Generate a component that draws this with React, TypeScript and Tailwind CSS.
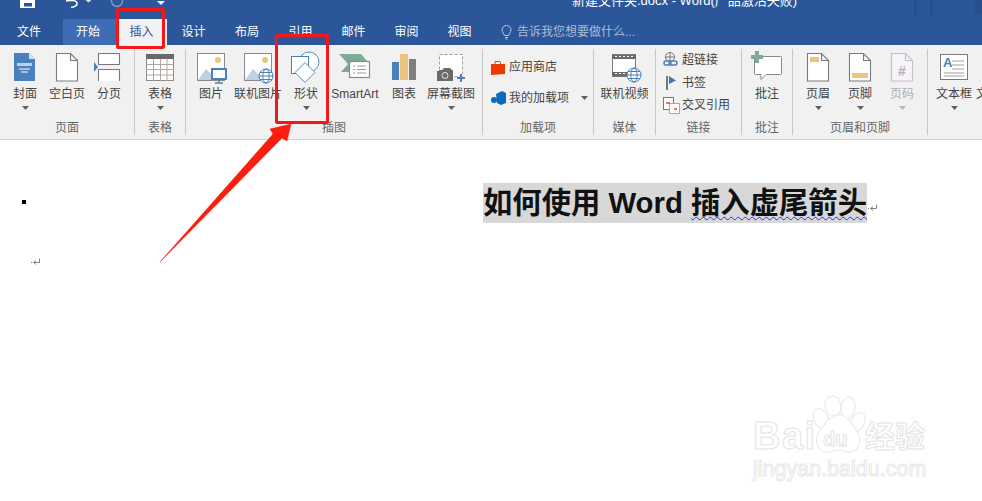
import React from "react";

const FONT = '"Liberation Sans","Noto Sans CJK SC",sans-serif';

const Caret = ({ light }: { light?: boolean }) => (
  <svg width="7" height="4" viewBox="0 0 7 4"><path d="M0 0h7L3.5 4z" fill={light ? "#b5b5b5" : "#606060"} /></svg>
);

const Btn = ({ w, icon, label, caret, disabled }: { w: string; icon: React.ReactNode; label: string; caret?: boolean; disabled?: boolean }) => (
  <div className={`${w} flex flex-col items-center shrink-0 pt-[2px]`}>
    <div className="h-[32px] w-[32px] flex items-center justify-center">{icon}</div>
    <div className={`h-[16px] mt-[3px] text-[12px] leading-[16px] whitespace-nowrap ${disabled ? "text-[#b0b0b0]" : "text-[#444444]"}`}>{label}</div>
    {caret && <div className="mt-[4px] h-[4px] flex"><Caret light={disabled} /></div>}
  </div>
);

const Group = ({ w, label, children, className = "" }: { w: string; label: string; children: React.ReactNode; className?: string }) => (
  <div className={`${w} shrink-0 h-[86px] mt-[4px] border-r border-[#c8c8c8] flex flex-col`}>
    <div className={`h-[72px] flex ${className}`}>{children}</div>
    <div className="h-[14px] text-center text-[12px] leading-[15px] text-[#666666]">{label}</div>
  </div>
);

const S = ({ children }: { children: React.ReactNode }) => (
  <svg width="32" height="32" viewBox="0 0 32 32" fill="none" overflow="visible">{children}</svg>
);

const Page = ({ fill = "#fff", stroke = "#7a7a7a" }: { fill?: string; stroke?: string }) => (
  <path d="M5.5 2.5h14l7 7v20.500h-21z M19.5 2.500v7h7" fill={fill} stroke={stroke} strokeWidth="1.100" />
);

const Globe = ({ x, y, r = 7 }: { x: number; y: number; r?: number }) => (
  <g stroke="#4a7fb8" fill="#fff">
    <circle cx={x} cy={y} r={r} />
    <ellipse cx={x} cy={y} rx={r * 0.45} ry={r} fill="none" />
    <path d={`M${x - r} ${y}h${2 * r}M${x - r + 1} ${y - r / 2}h${2 * r - 2}M${x - r + 1} ${y + r / 2}h${2 * r - 2}`} />
  </g>
);

const Picture = () => (
  <>
    <rect x="2.5" y="2.5" width="27" height="27" fill="#fff" stroke="#8a8a8a" />
    <circle cx="23" cy="9" r="3" fill="#edc47e" />
    <path d="M3 29l8-11 6 6 3-3 8 8z" fill="#bcd0e6" />
  </>
);

const icons = {
  cover: (
    <S>
      <path d="M5 2h15l6 6v22H5z" fill="#4a80bb" />
      <path d="M20 2l6 6h-6z" fill="#d5e3f1" />
      <path d="M8 12h15v3H8z" fill="#d5e3f1" opacity=".8" />
      <path d="M10 18h11M12 21h7" stroke="#fff" />
    </S>
  ),
  blank: <S><Page /></S>,
  pageBreak: (
    <S>
      <path d="M5.500 2.500h21v11h-21zM5.500 30v-11.500h21V30" fill="#fff" stroke="#7a7a7a" strokeWidth="1.100" />
      <path d="M1 11l4 5-4 5z" fill="#4a80bb" />
    </S>
  ),
  table: (
    <S>
      <rect x="2.5" y="3.5" width="27" height="26" fill="#fff" stroke="#8a8a8a" />
      <rect x="2" y="3" width="28" height="5" fill="#6a6a6a" />
      <path d="M2 13.500h28M2 18.500h28M2 24h28M9.500 8v22M16.500 8v22M23 8v22" stroke="#b0a8a0" />
    </S>
  ),
  picture: (
    <S>
      <Picture />
      <rect x="17" y="18" width="14" height="10" fill="#fff" stroke="#4a7fb8" strokeWidth="2" />
      <path d="M24 28v3M20 32h8" stroke="#4a7fb8" strokeWidth="1.500" />
    </S>
  ),
  online: (
    <S>
      <Picture />
      <Globe x={24} y={25} />
    </S>
  ),
  shape: (
    <S>
      <circle cx="19" cy="11" r="10" fill="#fff" stroke="#5b8fc4" />
      <rect x="1.500" y="5.500" width="17" height="17" fill="#fff" stroke="#4a7fb8" />
      <path d="M15 11.500l10 10-10 10-10-10z" fill="#fff" stroke="#5b8fc4" />
    </S>
  ),
  smart: (
    <S>
      <path d="M0 3h22l6 7H16v11H2l7-8z" fill="#7dab96" />
      <rect x="10.500" y="10.500" width="20" height="16" fill="#fff" stroke="#8a8a8a" strokeWidth="1.200" />
      <path d="M14 15h2M18 15h9M14 18.500h2M18 18.500h9M14 22h2M18 22h9" stroke="#9a9a9a" />
    </S>
  ),
  chart: (
    <S>
      <rect x="4" y="11" width="7" height="18" fill="#4a80bb" />
      <rect x="12" y="3" width="8" height="26" fill="#edc47e" />
      <rect x="21" y="8" width="7" height="21" fill="#7f7f7f" />
    </S>
  ),
  shot: (
    <S>
      <rect x="4.500" y="3.500" width="23" height="22" fill="#fff" stroke="#a0a0a0" strokeDasharray="3 2" />
      <path d="M2 20h2v-1h3l2-2h6l2 2h1v11H2z" fill="#6a6a6a" />
      <circle cx="10" cy="24.500" r="3" fill="#6a6a6a" stroke="#e8e8e8" />
      <path d="M26 23v8M22 27h8" stroke="#4a80bb" strokeWidth="2" />
    </S>
  ),
  video: (
    <S>
      <rect x="3.500" y="3.500" width="23" height="22" fill="#fff" stroke="#7a7a7a" />
      <path d="M3 4h24v4H3zM3 21h24v4H3z" fill="#6a6a6a" />
      <path d="M6 5.500h2M10 5.500h2M14 5.500h2M18 5.500h2M22 5.500h2M6 22.500h2M10 22.500h2M14 22.500h2" stroke="#fff" />
      <Globe x={25} y={24} />
    </S>
  ),
  comment: (
    <S>
      <path d="M3.500 5.500h26a1 1 0 0 1 1 1v16a1 1 0 0 1-1 1H15l-5 5v-5H4.500a1 1 0 0 1-1-1z" fill="#fff" stroke="#8a8a8a" />
      <path d="M4 0h4v4h4v4H8v4H4V8H0V4h4z" fill="#7dab96" />
    </S>
  ),
  header: (
    <S>
      <Page />
      <rect x="8" y="6" width="9" height="5" fill="#edc47e" />
    </S>
  ),
  footer: (
    <S>
      <Page />
      <rect x="8" y="22" width="16" height="5" fill="#edc47e" />
    </S>
  ),
  pageNo: (
    <S>
      <Page fill="#f6f4f8" stroke="#c4bec6" />
    </S>
  ),
  textbox: (
    <S>
      <rect x="2.500" y="3.500" width="27" height="25" fill="#fff" stroke="#7a7a7a" />
      <path d="M14 10h12M14 14h12M14 18h12M6 22h20M6 25h20" stroke="#a0a0a0" />
    </S>
  ),
};

const SmallRow = ({ icon, label }: { icon: React.ReactNode; label: string }) => (
  <div className="flex items-center h-[22.500px]">
    <div className="w-[19px] h-[18px] flex items-center shrink-0">{icon}</div>
    <span className="text-[12px] text-[#444444] whitespace-nowrap">{label}</span>
  </div>
);

const Return = () => (
  <svg width="10" height="9" viewBox="0 0 10 9" fill="none" className="shrink-0">
    <path d="M8.500 0.500v4H3M5 2.500L2.500 4.500 5 6.500" stroke="#808080" />
    <rect x="0" y="4" width="1" height="1" fill="#808080" />
  </svg>
);

const tabs: [string, string, string][] = [
  ["文件", "w-[58px] mr-[5px]", "text-white"],
  ["开始", "w-[53px] bg-[#3e6db5] pr-[3px]", "text-white"],
  ["插入", "w-[51px] bg-[#f1f1f1]", "text-[#2b579a]"],
  ["设计", "w-[53px]", "text-white"],
  ["布局", "w-[54px]", "text-white"],
  ["引用", "w-[53px]", "text-white"],
  ["邮件", "w-[53px]", "text-white"],
  ["审阅", "w-[53px]", "text-white"],
  ["视图", "w-[53px]", "text-white"],
];

export default function App() {
  return (
    <div className="relative w-[982px] h-[501px] overflow-hidden bg-white" style={{ fontFamily: FONT }}>
      {/* title bar */}
      <div className="h-[19px] bg-[#2b579a] relative overflow-hidden flex items-start">
        <svg width="15" height="8" viewBox="0 0 15 8" className="ml-[20px] shrink-0">
          <path d="M0 0h15v8H0z" fill="#fff" />
          <rect x="4" y="3" width="8" height="3.500" fill="#2b579a" />
        </svg>
        <svg width="26" height="9" viewBox="0 0 26 9" fill="none" className="ml-[30px] shrink-0">
          <path d="M1 1c4-1 11-1 11 2.500C12 6 9 7 6 7.500" stroke="#fff" strokeWidth="1.600" />
          <path d="M20.500 0h6l-3 2.500z" fill="#d8e0ee" />
        </svg>
        <svg width="14" height="8" viewBox="0 0 14 8" fill="none" className="ml-[19px] shrink-0">
          <circle cx="7" cy="1" r="5.500" stroke="#7c97c4" strokeWidth="1.500" />
        </svg>
        <svg width="8" height="4" viewBox="0 0 8 4" className="ml-[33px] mt-[1px] shrink-0">
          <path d="M0 0h8L4 4z" fill="#fff" />
        </svg>
        <div className="absolute left-[572px] top-[-8px] text-[13px] leading-[18px] text-white whitespace-nowrap">新建文件夹.docx - Word(产品激活失败)</div>
        <div className="absolute left-[914px] top-0 w-[3px] h-[16px] bg-[#26508f]" />
        <div className="absolute left-[930px] top-0 w-[3px] h-[18px] bg-[#26508f]" />
        <div className="absolute left-[974px] top-0 w-[8px] h-[14px] bg-[#26508f]" />
      </div>

      {/* tabs */}
      <div className="h-[26px] bg-[#2b579a] flex items-stretch">
        {tabs.map(([t, c, tc]) => (
          <div key={t} className={`${c} ${tc} shrink-0 flex items-center justify-center text-[12px]`}>{t}</div>
        ))}
        <div className="flex items-center ml-[15px] text-[12px] text-[#a9bcd9]">
          <svg width="11" height="15" viewBox="0 0 11 15" fill="none" className="mr-[5px]">
            <path d="M3.500 10.500C3 8.500 1 7.500 1 5a4.500 4.500 0 0 1 9 0c0 2.500-2 3.500-2.500 5.500zM4 12.500h3M4.500 14h2" stroke="#b9c9e2" />
          </svg>
          告诉我您想要做什么...
        </div>
      </div>

      {/* ribbon */}
      <div className="h-[95px] bg-[#f1f1f1] border-b border-[#d4d4d4] flex overflow-hidden">
        <Group w="w-[135px]" label="页面" className="pl-[4px]">
          <Btn w="w-[42px]" icon={icons.cover} label="封面" caret />
          <Btn w="w-[42px]" icon={icons.blank} label="空白页" />
          <Btn w="w-[42px]" icon={icons.pageBreak} label="分页" />
        </Group>
        <Group w="w-[51px]" label="表格" className="justify-center">
          <Btn w="w-[48px]" icon={icons.table} label="表格" caret />
        </Group>
        <Group w="w-[297px]" label="插图" className="pl-[2px]">
          <Btn w="w-[46px]" icon={icons.picture} label="图片" />
          <Btn w="w-[48px]" icon={icons.online} label="联机图片" />
          <Btn w="w-[48px]" icon={icons.shape} label="形状" caret />
          <Btn w="w-[50px]" icon={icons.smart} label="SmartArt" />
          <Btn w="w-[48px]" icon={icons.chart} label="图表" />
          <Btn w="w-[46px]" icon={icons.shot} label="屏幕截图" caret />
        </Group>
        <Group w="w-[111px]" label="加载项" className="flex-col pl-[8px] pt-[7px] gap-[9px]">
          <div className="flex items-center h-[22px]">
            <svg width="14" height="15" viewBox="0 0 14 15" className="mr-[4px]">
              <path d="M0 4h14v10l-14 1z" fill="#eb3c00" />
              <path d="M4 5V1.500h5L10 5" stroke="#eb3c00" fill="none" />
            </svg>
            <span className="text-[12px] text-[#444444]">应用商店</span>
          </div>
          <div className="flex items-center h-[22px]">
            <svg width="15" height="14" viewBox="0 0 15 14" className="mr-[3px]">
              <path d="M5 3l6-3 4 2v10l-5 2-4-2z" fill="#0a6ac0" />
              <circle cx="3" cy="9" r="3" fill="#0a6ac0" />
            </svg>
            <span className="text-[12px] text-[#444444]">我的加载项</span>
            <span className="ml-[12px] flex"><Caret /></span>
          </div>
        </Group>
        <Group w="w-[62px]" label="媒体" className="justify-center">
          <Btn w="w-[56px]" icon={icons.video} label="联机视频" />
        </Group>
        <Group w="w-[86px]" label="链接" className="flex-col pl-[7px]">
          <SmallRow
            label="超链接"
            icon={
              <svg width="16" height="16" viewBox="0 0 16 16" fill="none">
                <circle cx="7" cy="5" r="4.500" stroke="#777" />
                <path d="M2.500 5h9M7 .5v9" stroke="#777" />
                <rect x="1" y="9" width="7" height="4" rx="2" stroke="#4a80bb" strokeWidth="1.500" fill="#f1f1f1" />
                <rect x="6" y="9" width="8" height="4" rx="2" stroke="#4a80bb" strokeWidth="1.500" />
              </svg>
            }
          />
          <SmallRow
            label="书签"
            icon={
              <svg width="14" height="16" viewBox="0 0 14 16">
                <rect x="3" y="1" width="2" height="14" fill="#777" />
                <path d="M6 1l7 4.500L6 9z" fill="#3f79b8" />
              </svg>
            }
          />
          <SmallRow
            label="交叉引用"
            icon={
              <svg width="17" height="17" viewBox="0 0 17 17" fill="none">
                <rect x=".5" y=".5" width="10" height="12" fill="#fff" stroke="#777" />
                <rect x="6.500" y="6.500" width="10" height="10" fill="#fff" stroke="#aaa" />
                <path d="M3 6h4M11 12h3" stroke="#d84a1a" strokeWidth="1.500" />
              </svg>
            }
          />
        </Group>
        <Group w="w-[51px]" label="批注" className="justify-center">
          <Btn w="w-[48px]" icon={icons.comment} label="批注" />
        </Group>
        <Group w="w-[135px]" label="页眉和页脚" className="pl-[4px]">
          <Btn w="w-[42px]" icon={icons.header} label="页眉" caret />
          <Btn w="w-[42px]" icon={icons.footer} label="页脚" caret />
          <Btn
            w="w-[42px]"
            disabled
            caret
            label="页码"
            icon={
              <div className="relative w-[32px] h-[32px]">
                {icons.pageNo}
                <span className="absolute left-0 right-0 top-[13px] text-center text-[14px] leading-[15px] font-bold text-[#b5b0b8]">#</span>
              </div>
            }
          />
        </Group>
        <div className="flex shrink-0 pl-[4px] mt-[4px]">
          <Btn
            w="w-[44px]"
            caret
            label="文本框"
            icon={
              <div className="relative w-[32px] h-[32px]">
                {icons.textbox}
                <span className="absolute left-[5px] top-[5px] text-[13px] leading-[14px] font-bold text-[#4a80bb]">A</span>
              </div>
            }
          />
          <div className="pt-[2px]">
            <div className="h-[35px]" />
            <div className="text-[12px] leading-[16px] text-[#444444] whitespace-nowrap">文档</div>
          </div>
        </div>
      </div>

      {/* document */}
      <div className="pt-[43px] pl-[22px]">
        <div className="flex items-center h-[40px]">
          <div className="w-[4px] h-[4px] bg-black shrink-0 mt-[-3px]" />
          <div className="ml-[457px] h-[40px] bg-[#d8d8d8] text-[29.33px] leading-[40px] font-bold text-[#111111] whitespace-nowrap">
            如何使用 Word <span className="underline decoration-wavy decoration-[#2a3ad6] decoration-1 underline-offset-[3px]">插入虚尾箭头</span>
          </div>
          <div className="ml-[1px] mt-[10px]"><Return /></div>
        </div>
        <div className="mt-[35px] ml-[9px]"><Return /></div>
      </div>

      {/* annotations */}
      <div className="absolute left-[116px] top-[8px] w-[49px] h-[41px] border-[3px] border-[#f5161a] rounded-[2px]" />
      <div className="absolute left-[275px] top-[34px] w-[54px] h-[90px] border-[3px] border-[#f5161a] rounded-[2px]" />
      <svg className="absolute left-0 top-0 pointer-events-none" width="982" height="501" viewBox="0 0 982 501">
        <path d="M160 262L273 134 270 129 291 124 287 141 282 138z" fill="#fb1d10" stroke="#fb1d10" strokeWidth=".5" />
      </svg>

      {/* watermark */}
      <div className="absolute left-[753px] top-[395px] w-[180px] h-[90px] pointer-events-none">
        <svg className="absolute left-0 top-0" width="180" height="70" viewBox="0 0 180 70" fill="#fff" stroke="#ebebeb" strokeWidth="1.200">
          <ellipse cx="80" cy="11" rx="8" ry="10" transform="rotate(-10 80 11)" />
          <ellipse cx="95" cy="13" rx="7" ry="11" transform="rotate(10 95 13)" />
          <ellipse cx="68" cy="24" rx="7" ry="11" transform="rotate(-25 68 24)" />
          <ellipse cx="105" cy="27" rx="6.500" ry="10" transform="rotate(25 105 27)" />
          <path d="M86 20c9 0 13 10 17 15 6 7 5 20-5 22-5 1-7-2-12-2s-9 3-14 2c-9-2-11-14-5-22 5-6 10-15 19-15z" />
        </svg>
        <span className="absolute left-0 top-[19px] text-[38px] leading-[44px] font-bold text-white tracking-[1.500px] [-webkit-text-stroke:1px_#e4e4e4]">Bai</span>
        <span className="absolute left-[70px] top-[32px] text-[20px] leading-[24px] font-bold text-white [-webkit-text-stroke:1px_#e4e4e4]">du</span>
        <span className="absolute left-[112px] top-[24px] text-[30px] leading-[36px] font-bold text-white [-webkit-text-stroke:1px_#e4e4e4]">经验</span>
        <span className="absolute left-0 top-[61px] text-[21.500px] leading-[26px] text-white [-webkit-text-stroke:1px_#e8e8e8]">jingyan.baidu.com</span>
      </div>
    </div>
  );
}
